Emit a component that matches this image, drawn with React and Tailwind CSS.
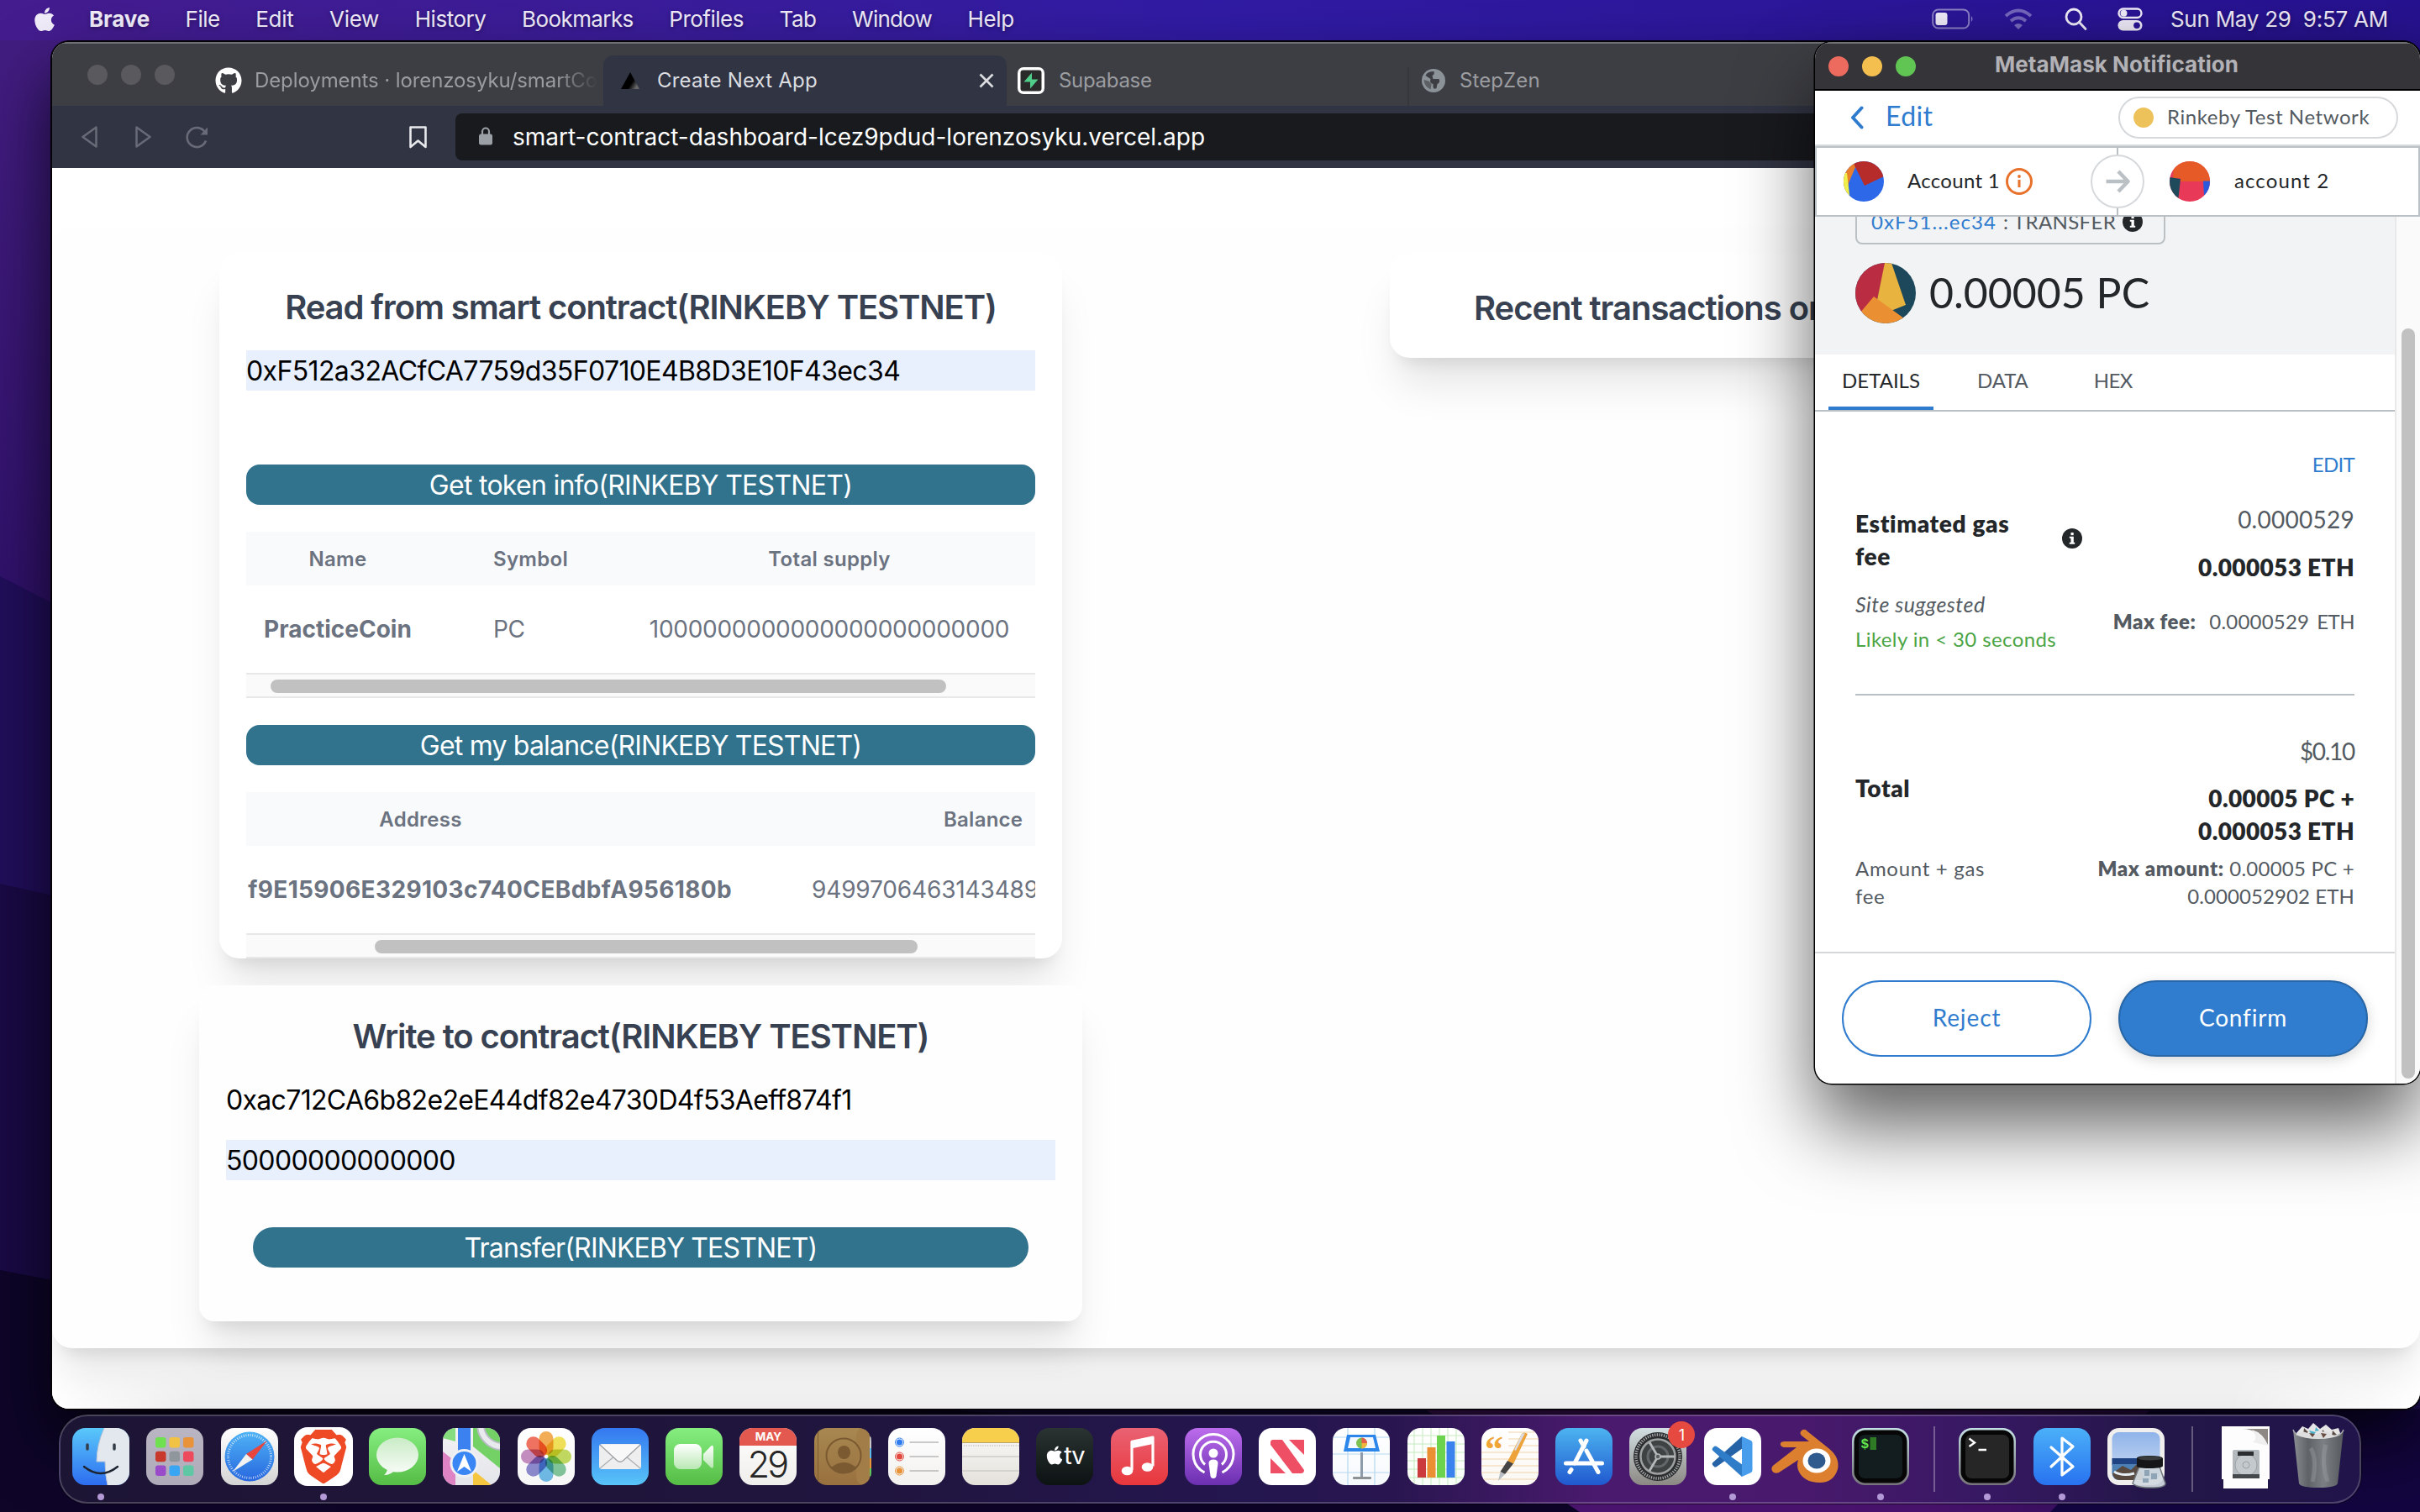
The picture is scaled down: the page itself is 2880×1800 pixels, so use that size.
import React from "react";
import { FaApple, FaGithub } from "react-icons/fa";
import { SiBrave } from "react-icons/si";

/* ---------- Wallpaper ---------- */
function Wallpaper() {
  return (
    <svg className="absolute inset-0 h-full w-full" viewBox="0 0 2880 1800" preserveAspectRatio="none" aria-hidden="true">
      <defs>
        <linearGradient id="wpTop" x1="0" y1="0" x2="0" y2="1">
          <stop offset="0" stopColor="#431e82" />
          <stop offset="1" stopColor="#2c0e66" />
        </linearGradient>
        <linearGradient id="wpPurple" x1="0" y1="0" x2="1" y2="0">
          <stop offset="0" stopColor="#4d1570" />
          <stop offset="0.5" stopColor="#48136c" />
          <stop offset="1" stopColor="#170643" />
        </linearGradient>
      </defs>
      <rect width="2880" height="1800" fill="#0d0428" />
      <path d="M0 0H2880V900H0Z" fill="url(#wpTop)" />
      <path d="M0 686L62 718L2880 1300V1700L0 1100Z" fill="#210e5c" />
      <path d="M0 1052L62 1066L2880 1700V1800L0 1600Z" fill="#190a45" />
      <path d="M0 1512L62 1524L400 1545V1800H0Z" fill="#0e0529" />
      <path d="M1695 1677H2880V1800H1880Z" fill="url(#wpPurple)" />
      <path d="M2560 1677H2880V1800H2440Z" fill="#13053f" />
      <rect x="2700" width="180" height="300" fill="#27128a" />
    </svg>
  );
}

/* ---------- Menu bar ---------- */
function MenuBar() {
  return (
    <header className="relative flex h-12 shrink-0 items-center bg-gradient-to-r from-[#441c8e] via-[#301ba4] to-[#27138f] pb-[3px] text-[26px] text-[#f0ecf9] [text-shadow:0_2px_5px_rgba(0,0,0,0.35)]">
      <FaApple className="ml-[37px] h-8 w-8" />
      <nav className="ml-[37px] flex items-center gap-[42.6px] whitespace-nowrap">
        <span className="font-bold tracking-[-0.14px]">Brave</span>
        <span className="tracking-[-0.5px]">File</span>
        <span className="tracking-[-0.3px]">Edit</span>
        <span className="tracking-[-0.3px]">View</span>
        <span className="tracking-[-0.45px]">History</span>
        <span className="tracking-[-0.6px]">Bookmarks</span>
        <span className="tracking-[-0.5px]">Profiles</span>
        <span className="tracking-[-0.5px]">Tab</span>
        <span className="tracking-[-0.8px]">Window</span>
        <span className="tracking-[-0.3px]">Help</span>
      </nav>
      <div className="ml-auto mr-[38px] flex items-center">
        <svg width="50" height="26" viewBox="0 0 50 26" fill="none">
          <rect x="1.2" y="1.5" width="43" height="22" rx="6.5" stroke="#f0ecf9" strokeOpacity="0.5" strokeWidth="2" />
          <rect x="4.5" y="5" width="14" height="15" rx="3" fill="#f0ecf9" />
          <path d="M47 9q3 3.500 0 7z" fill="#f0ecf9" fillOpacity="0.5" />
        </svg>
        <svg className="ml-[36px]" width="34" height="26" viewBox="0 0 34 26" fill="none" stroke="#f0ecf9" strokeOpacity="0.38" strokeWidth="4">
          <path d="M2 9Q17-4 32 9" />
          <path d="M8 15Q17 7.500 26 15" />
          <path d="M17 25l-5-5q5-4 10 0z" fill="#f0ecf9" fillOpacity="0.4" stroke="none" />
        </svg>
        <svg className="ml-[38px]" width="27" height="28" viewBox="0 0 27 28" fill="none" stroke="#f0ecf9" strokeWidth="2.800">
          <circle cx="11" cy="11" r="9" />
          <path d="M17.500 17.500l7.500 8" strokeLinecap="round" />
        </svg>
        <svg className="ml-[36px]" width="30" height="28" viewBox="0 0 30 28" fill="none">
          <rect x="1.500" y="1.500" width="27" height="10.500" rx="5.200" stroke="#f0ecf9" strokeWidth="2.400" />
          <circle cx="7.500" cy="6.700" r="4" fill="#f0ecf9" />
          <rect x="0.500" y="15" width="29" height="12.500" rx="6.200" fill="#f0ecf9" />
          <circle cx="23" cy="21.200" r="3.800" fill="#2a1596" />
        </svg>
        <span className="ml-[33px] whitespace-pre tracking-[-0.25px]">Sun May 29  9:57 AM</span>
      </div>
    </header>
  );
}

/* ---------- Browser ---------- */
function TabStrip() {
  return (
    <div className="flex h-[76px] items-end border-t-2 border-[#707176] bg-[#3d3e43] text-2xl text-[#9b9ca0]">
      <div className="flex h-[60px] w-[656px] items-center">
        <div className="mb-[14px] ml-[42px] flex gap-4">
          <i className="h-6 w-6 rounded-full bg-[#59595e]" />
          <i className="h-6 w-6 rounded-full bg-[#59595e]" />
          <i className="h-6 w-6 rounded-full bg-[#59595e]" />
        </div>
        <FaGithub className="ml-[48px] h-8 w-8 shrink-0 text-white" />
        <span className="ml-[15px] w-[408px] overflow-hidden whitespace-nowrap tracking-[-0.1px] [mask-image:linear-gradient(to_right,black_88%,transparent)]">
          Deployments · lorenzosyku/smartCo
        </span>
      </div>
      <div className="flex h-[60px] w-[480px] items-center rounded-t-xl bg-[#313443] text-[#dcdde0]">
        <svg className="ml-[21px]" width="22" height="20" viewBox="0 0 22 20">
          <defs>
            <linearGradient id="tri" x1="0" y1="0" x2="1" y2="0.600">
              <stop offset="0.700" stopColor="#000" />
              <stop offset="1" stopColor="#666" />
            </linearGradient>
          </defs>
          <path d="M11 0L22 20H0Z" fill="url(#tri)" />
        </svg>
        <span className="ml-[21px] whitespace-nowrap tracking-[0.2px]">Create Next App</span>
        <svg className="ml-auto mr-[15px]" width="18" height="18" viewBox="0 0 18 18" stroke="#dcdde0" strokeWidth="2.600">
          <path d="M1.500 1.500l15 15M16.500 1.500l-15 15" />
        </svg>
      </div>
      <div className="flex h-[60px] w-[477px] items-center">
        <svg className="ml-[13px]" width="32" height="32" viewBox="0 0 32 32">
          <rect width="32" height="32" rx="7" fill="#fff" />
          <rect x="3.500" y="3.500" width="25" height="25" rx="3" fill="#2a2a2a" />
          <path d="M17 6.500L7.500 17.500H15V25.500L24.500 14.500H17Z" fill="#4fce8a" />
        </svg>
        <span className="ml-[17px] tracking-[-0.3px]">Supabase</span>
      </div>
      <div className="flex h-[60px] w-[480px] items-center">
        <i className="h-[46px] w-[2px] self-end bg-[#36373b]" />
        <svg className="ml-[15px]" width="28" height="28" viewBox="0 0 28 28">
          <circle cx="14" cy="14" r="14" fill="#8b9398" />
          <path d="M14.500 3q1 4-2 5l1 4h7q2 4-2 6l-1 5q-4 2-4-2v-3q-5-1-3-6l-6-4q2-5 10-5z" fill="#3d3e43" />
          <path d="M2.500 13l6 1.500 3 4-1 6Q3 21 2.500 13z" fill="#3d3e43" fillOpacity="0.6" />
        </svg>
        <span className="ml-[17px] tracking-[0.1px]">StepZen</span>
      </div>
    </div>
  );
}

function Toolbar() {
  return (
    <div className="flex h-[74px] items-center bg-[#313443]">
      <svg className="ml-[35px]" width="19" height="26" viewBox="0 0 19 26" fill="none" stroke="#686b77" strokeWidth="2.500" strokeLinejoin="round">
        <path d="M17.500 1.500v23L1.500 13Z" />
      </svg>
      <svg className="ml-[45px]" width="19" height="26" viewBox="0 0 19 26" fill="none" stroke="#686b77" strokeWidth="2.500" strokeLinejoin="round">
        <path d="M1.500 1.500v23L17.500 13Z" />
      </svg>
      <svg className="ml-[41px]" width="27" height="27" viewBox="0 0 27 27" fill="none" stroke="#686b77" strokeWidth="2.600">
        <path d="M24 17.500A11.500 11.500 0 1 1 23 7.500" />
        <path d="M26 1.500V10.500H17.500Z" fill="#686b77" stroke="none" />
      </svg>
      <svg className="ml-[239px]" width="21" height="27" viewBox="0 0 21 27" fill="none" stroke="#e8e9ec" strokeWidth="2.600" strokeLinejoin="round">
        <path d="M1.500 1.500h18v23.500l-9-7.500-9 7.500Z" />
      </svg>
      <div className="ml-[34px] flex h-14 flex-1 items-center rounded-l-lg bg-[#191a1e]">
        <svg className="mb-0.5 ml-[28px]" width="16" height="22" viewBox="0 0 16 22">
          <rect y="8.500" width="16" height="13" rx="2.500" fill="#9aa0a6" />
          <path d="M4 9V5.500a4 4 0 0 1 8 0V9" fill="none" stroke="#9aa0a6" strokeWidth="2.200" />
        </svg>
        <span className="ml-[24px] whitespace-nowrap pb-px text-[28px] text-white">
          smart-contract-dashboard-lcez9pdud-lorenzosyku.vercel.app
        </span>
      </div>
    </div>
  );
}

const cardShadow = "shadow-[0_40px_50px_-10px_rgba(0,0,0,0.1),0_16px_20px_-12px_rgba(0,0,0,0.1)]";

function ScrollTrack({ left, width }) {
  return (
    <div className="flex h-[30px] items-center border-y-2 border-[#e8e8e8] bg-[#fafafa] pt-px">
      <i className="h-4 rounded-lg bg-[#c1c1c1]" style={{ marginLeft: left, width }} />
    </div>
  );
}

function ReadCard() {
  return (
    <section className={"ml-[199px] mt-[32px] h-[839px] w-[1003px] rounded-3xl bg-white px-8 pt-9 " + cardShadow}>
      <h2 className="text-center text-[40px] font-semibold leading-[56px] tracking-[-1.1px] text-[#374151]">
        Read from smart contract(RINKEBY TESTNET)
      </h2>
      <div className="mt-[23px] h-12 bg-[#e8f0fe] text-[32px] leading-[50px] tracking-[-0.61px] text-black">
        0xF512a32ACfCA7759d35F0710E4B8D3E10F43ec34
      </div>
      <button className="mt-[88px] block h-12 w-full rounded-2xl bg-[#31728d] text-[32px] leading-[49px] tracking-[-0.72px] text-white">
        Get token info(RINKEBY TESTNET)
      </button>
      <div className="mt-8 text-[#6b7280]">
        <div className="grid h-16 grid-cols-[218px_231px_490px] items-center bg-[#f9fafc] pt-0.5 text-2xl font-semibold tracking-[0.3px]">
          <span className="text-center">Name</span>
          <span className="pl-[76px]">Symbol</span>
          <span className="text-center">Total supply</span>
        </div>
        <div className="grid h-[104px] grid-cols-[218px_231px_490px] items-center text-[28px]">
          <span className="text-center font-bold">PracticeCoin</span>
          <span className="pl-[76px] tracking-[-0.5px]">PC</span>
          <span className="text-center tracking-[-0.28px]">1000000000000000000000000</span>
        </div>
        <ScrollTrack left={29} width={804} />
      </div>
      <button className="mt-8 block h-12 w-full rounded-2xl bg-[#31728d] text-[32px] leading-[49px] tracking-[-0.8px] text-white">
        Get my balance(RINKEBY TESTNET)
      </button>
      <div className="mt-8 overflow-hidden text-[#6b7280]">
        <div className="flex h-16 items-center bg-[#f9fafc] pt-0.5 text-2xl font-semibold tracking-[0.25px]">
          <span className="w-[415px] shrink-0 text-center">Address</span>
          <span className="ml-[415px] shrink-0">Balance</span>
        </div>
        <div className="flex h-[104px] items-center whitespace-nowrap text-[28px]">
          <span className="flex w-[578px] shrink-0 justify-end font-bold tracking-[0.35px]">f9E15906E329103c740CEBdbfA956180b</span>
          <span className="ml-[95px] shrink-0 tracking-[-0.15px]">9499706463143489</span>
        </div>
        <ScrollTrack left={153} width={646} />
      </div>
    </section>
  );
}

function WriteCard() {
  return (
    <section className={"ml-[175px] mt-8 h-[400px] w-[1051px] rounded-[18px] bg-[#fefefe] px-8 pt-8 " + cardShadow}>
      <h2 className="text-center text-[40px] font-semibold leading-[57px] tracking-[-1.1px] text-[#374151]">
        Write to contract(RINKEBY TESTNET)
      </h2>
      <div className="mt-[23px] h-12 text-[32px] leading-[50px] tracking-[-0.67px] text-black">0xac712CA6b82e2eE44df82e4730D4f53Aeff874f1</div>
      <div className="mt-6 h-12 bg-[#e8f0fe] text-[32px] leading-[50px] tracking-[-0.65px] text-black">50000000000000</div>
      <button className="mx-8 mt-14 block h-12 w-[923px] rounded-full bg-[#31728d] text-[32px] leading-[49px] tracking-[-0.82px] text-white">
        Transfer(RINKEBY TESTNET)
      </button>
    </section>
  );
}

function BrowserWindow() {
  return (
    <div className="absolute left-[62px] top-[50px] flex h-[1627px] w-[2818px] flex-col overflow-hidden rounded-[20px] bg-white shadow-[0_0_0_2px_#050308,0_40px_80px_rgba(0,0,0,0.75)]">
      <TabStrip />
      <Toolbar />
      <div className="relative flex-1 bg-white pt-[70px]">
        <main className={"relative flex h-[1335px] items-start rounded-3xl bg-[#fefefe] " + cardShadow}>
          <div>
            <ReadCard />
            <WriteCard />
          </div>
          <section className={"ml-[366px] mt-[32px] h-[124px] w-[1003px] rounded-3xl bg-white pl-[100px] pt-9 " + cardShadow}>
            <h2 className="whitespace-nowrap text-[40px] font-semibold leading-[57px] tracking-[-1.05px] text-[#374151]">Recent transactions on</h2>
          </section>
        </main>
        <div className="h-[72px] bg-gradient-to-b from-transparent from-30% to-[rgba(0,0,0,0.07)] [mask-image:linear-gradient(to_right,transparent,black_6%,black_92%,transparent)]" />
      </div>
    </div>
  );
}

/* ---------- MetaMask ---------- */
function InfoSolid() {
  return (
    <svg width="24" height="24" viewBox="0 0 24 24">
      <circle cx="12" cy="12" r="12" fill="#24272a" />
      <rect x="10.500" y="5" width="3.200" height="3.200" fill="#fff" />
      <path d="M8.800 9.800h5v7h1.400v2H8.800v-2h1.700v-5H8.800z" fill="#fff" />
    </svg>
  );
}

function MetaMaskWindow() {
  return (
    <div className="absolute left-[2160px] top-[50px] flex h-[1240px] w-[720px] flex-col overflow-hidden rounded-[20px] bg-white font-['Lato',sans-serif] text-2xl text-[#24272a] shadow-[0_0_0_1.5px_#000,0_50px_90px_rgba(0,0,0,0.62)] [font-variant-ligatures:none]">
      <div className="flex h-[58px] shrink-0 items-center border-b-2 border-t-2 border-b-black border-t-[#707075] bg-[#353439]">
        <div className="ml-4 flex gap-4">
          <i className="h-6 w-6 rounded-full bg-[#ec6a5e]" />
          <i className="h-6 w-6 rounded-full bg-[#f4bf4f]" />
          <i className="h-6 w-6 rounded-full bg-[#61c554]" />
        </div>
        <span className="ml-[94px] pb-[3px] font-['Inter',sans-serif] text-[26px] font-bold tracking-[0.06px] text-[#b2b1b6]">MetaMask Notification</span>
      </div>
      <div className="flex h-[64px] shrink-0 items-center">
        <svg className="ml-[42px]" width="16" height="28" viewBox="0 0 16 28" fill="none" stroke="#2f7ccf" strokeWidth="4" strokeLinecap="round" strokeLinejoin="round">
          <path d="M13.500 2.500L3 14l10.500 11.500" />
        </svg>
        <span className="ml-[26px] pb-[3px] text-[32px] tracking-[0.4px] text-[#2f7ccf]">Edit</span>
        <div className="ml-auto mr-[26px] flex h-[50px] w-[333px] items-center rounded-full border-2 border-[#d6d9dc]">
          <i className="ml-4 h-6 w-6 rounded-full bg-[#edc25a]" />
          <span className="ml-4 whitespace-nowrap pb-0.5 tracking-[0.56px] text-[#535a61]">Rinkeby Test Network</span>
        </div>
      </div>
      <div className="h-[2px] shrink-0 bg-[#d6d9dc]" />
      <div className="relative z-10 flex h-[84px] shrink-0 items-center border-2 border-[#bbc0c5] bg-white">
        <svg className="ml-8" width="48" height="48" viewBox="0 0 48 48">
          <clipPath id="a1"><circle cx="24" cy="24" r="24" /></clipPath>
          <g clipPath="url(#a1)">
            <rect width="48" height="48" fill="#2c68e8" />
            <path d="M12 0L14 7L6 26L3 48H0V0Z" fill="#ea7f2b" />
            <path d="M0 14L4 14L8 48H0Z" fill="#f0f04a" />
            <path d="M12 0H48V18L25 29L13 5Z" fill="#b62c2a" />
          </g>
        </svg>
        <span className="ml-[28px] whitespace-nowrap pb-0.5 tracking-[0.3px]">Account 1</span>
        <svg className="ml-[7px]" width="32" height="32" viewBox="0 0 32 32" fill="none">
          <circle cx="16" cy="16" r="14.500" stroke="#e8712b" strokeWidth="3" />
          <path d="M16 14v9" stroke="#e8712b" strokeWidth="3" />
          <circle cx="16" cy="10" r="1.900" fill="#e8712b" />
        </svg>
        <svg className="ml-[69px]" width="64" height="80" viewBox="0 0 64 80" fill="none">
          <path d="M32 0v80" stroke="#bbc0c5" strokeWidth="2" />
          <circle cx="32" cy="40" r="31" fill="#fff" stroke="#d6d9dc" strokeWidth="2" />
          <path d="M18.500 40H44M33 28l11.500 12L33 52" stroke="#bbc0c5" strokeWidth="4.500" strokeLinejoin="round" />
        </svg>
        <svg className="ml-[30px]" width="48" height="48" viewBox="0 0 48 48">
          <clipPath id="a2"><circle cx="24" cy="24" r="24" /></clipPath>
          <g clipPath="url(#a2)">
            <rect width="48" height="48" fill="#e83a58" />
            <path d="M5 0H48V24H13V20H4Z" fill="#e55a27" />
            <path d="M0 19L13 21L10 48H0Z" fill="#1f4a5c" />
            <path d="M40 23.500H48V40L41 40Z" fill="#2b59dc" />
          </g>
        </svg>
        <span className="ml-[29px] whitespace-nowrap pb-0.5 tracking-[1.1px]">account 2</span>
      </div>
      <div className="flex min-h-0 flex-1">
        <div className="flex w-[690px] flex-col">
          <div className="h-[164px] shrink-0 overflow-hidden bg-[#f2f3f4] pl-12">
            <div className="-mt-[20px] flex h-[53px] w-[369px] items-center rounded-lg border-2 border-[#bbc0c5] pb-px pl-[17px]">
              <span className="tracking-[1.07px] text-[#2f7ccf]">0xF51...ec34</span>
              <span className="ml-[8px] tracking-[0.33px] text-[#535a61]">: TRANSFER</span>
              <span className="ml-[8px]"><InfoSolid /></span>
            </div>
            <div className="mt-[22px] flex items-center">
              <svg width="72" height="72" viewBox="0 0 72 72">
                <clipPath id="a3"><circle cx="36" cy="36" r="36" /></clipPath>
                <g clipPath="url(#a3)">
                  <rect width="72" height="72" fill="#1d475b" />
                  <path d="M0 0H36L26 44L0 72Z" fill="#b92c42" />
                  <path d="M35 0H43L60 50L40 58L26 44Z" fill="#e8b33e" />
                  <path d="M22 40L58 66V72H0V66Z" fill="#ea8f32" />
                </g>
              </svg>
              <span className="ml-4 whitespace-nowrap pb-0.5 text-[50px] leading-[60px]">0.00005 PC</span>
            </div>
          </div>
          <div className="flex h-[68px] shrink-0 border-b-2 border-[#bbc0c5] pl-4 text-[#535a61]">
            <span className="flex w-[125px] items-center justify-center border-b-4 border-[#2f7ccf] text-[#24272a]">DETAILS</span>
            <span className="ml-[52px] flex items-center pb-1 tracking-[-0.1px]">DATA</span>
            <span className="ml-[78px] flex items-center pb-1 tracking-[-0.6px]">HEX</span>
          </div>
          <div className="mt-[45px] h-[36px] pr-12 text-right leading-[36px] tracking-[-0.7px] text-[#2f7ccf]">EDIT</div>
          <div className="mx-12 flex h-[257px] shrink-0 justify-between border-b-2 border-[#bbc0c5]">
            <div className="flex w-[270px] flex-col pt-[33px]">
              <div className="flex items-center justify-between">
                <span className="w-[200px] text-[28px] font-extrabold leading-[39px] tracking-[0.65px]">Estimated gas fee</span>
                <span className="-mt-[4px]"><InfoSolid /></span>
              </div>
              <span className="mt-4 text-[25px] italic leading-[42px] tracking-[0.5px] text-[#535a61]">Site suggested</span>
              <span className="whitespace-nowrap leading-[42px] tracking-[0.4px] text-[#4ba545]">Likely in &lt; 30 seconds</span>
            </div>
            <div className="flex flex-col items-end whitespace-nowrap pt-[27px]">
              <span className="text-[28px] leading-[41px] tracking-[0.26px] text-[#535a61]">0.0000529</span>
              <span className="mt-4 text-[28px] font-extrabold leading-10 tracking-[0.35px]">0.000053 ETH</span>
              <span className="mt-[25px] flex leading-10 text-[#535a61]">
                <b className="font-extrabold tracking-[0.5px]">Max fee:</b>
                <span className="ml-4 tracking-[0.2px]">0.0000529</span>
                <span className="ml-[9px] tracking-[-0.5px]">ETH</span>
              </span>
            </div>
          </div>
          <div className="mx-12 flex h-[305px] shrink-0 justify-between">
            <div className="flex w-[170px] flex-col pt-[90px]">
              <span className="text-[28px] font-extrabold leading-10 tracking-[0.6px]">Total</span>
              <span className="mt-[59px] leading-[33px] tracking-[0.7px] text-[#535a61]">Amount + gas fee</span>
            </div>
            <div className="flex flex-col items-end whitespace-nowrap pt-[46px]">
              <span className="text-[28px] leading-10 tracking-[-1.3px] text-[#535a61]">$0.10</span>
              <span className="mt-[17px] text-[28px] font-extrabold leading-[39px] tracking-[0.35px]">0.00005 PC +</span>
              <span className="text-[28px] font-extrabold leading-[39px] tracking-[0.35px]">0.000053 ETH</span>
              <span className="mt-[8px] leading-[33px] tracking-[0.24px] text-[#535a61]">
                <b className="font-extrabold tracking-[0.65px]">Max amount:</b> 0.00005 PC +
              </span>
              <span className="leading-[33px] tracking-[0.1px] text-[#535a61]">0.000052902 ETH</span>
            </div>
          </div>
          <div className="flex flex-1 items-start gap-8 border-t-2 border-[#d6d9dc] pl-8 pt-8 text-[28px]">
            <button className="h-[91px] w-[297px] rounded-full border-2 border-[#2f7ccf] pb-0.5 tracking-[0.9px] text-[#2f7ccf]">Reject</button>
            <button className="h-[91px] w-[297px] rounded-full border-2 border-[#2866a6] bg-[#307dd0] pb-0.5 tracking-[0.8px] text-white shadow-[0_4px_16px_rgba(0,0,0,0.16)]">Confirm</button>
          </div>
        </div>
        <div className="flex w-[30px] justify-end border-l-2 border-[#e8e8e8] bg-[#fafafa] pr-[6px]">
          <i className="mt-[133px] h-[893px] w-4 rounded-full bg-[#c1c1c1]" />
        </div>
      </div>
    </div>
  );
}

/* ---------- Dock icons (68 × 68) ---------- */
function Grad({ id, from, to }) {
  return (
    <linearGradient id={id} x1="0" y1="0" x2="0" y2="1">
      <stop offset="0" stopColor={from} />
      <stop offset="1" stopColor={to} />
    </linearGradient>
  );
}

function Tile({ id, from, to, children }) {
  return (
    <svg width="68" height="68" viewBox="0 0 68 68" className="block overflow-visible">
      <defs>
        <Grad id={id} from={from} to={to} />
        <clipPath id={id + "c"}><rect width="68" height="68" rx="15.500" /></clipPath>
      </defs>
      <g clipPath={"url(#" + id + "c)"}>
        <rect width="68" height="68" fill={"url(#" + id + ")"} />
        {children}
      </g>
    </svg>
  );
}

const Finder = () => (
  <Tile id="fi" from="#5ac8fa" to="#2d6df0">
    <path d="M38 0Q29 20 29 40H39Q39 56 42 68H68V0Z" fill="#e3e7ee" />
    <path d="M38 0Q29 20 29 40H39Q39 56 42 68" fill="none" stroke="#b9c4d8" strokeWidth="1" />
    <path d="M18 20v5M50 20v5" stroke="#333d4a" strokeWidth="3.500" strokeLinecap="round" />
    <path d="M14 46Q34 62 54 46" fill="none" stroke="#1c2530" strokeWidth="2.400" strokeLinecap="round" />
  </Tile>
);

const PADS = [["#6fe04f", "#f2c244", "#e8923a"], ["#c9392b", "#8f979c", "#ee4a5e"], ["#9a4bc9", "#3aa5f2", "#5fc7a4"]];
const Launchpad = () => (
  <Tile id="lp" from="#bab5c2" to="#b0abb9">
    {PADS.map((row, r) => row.map((c, k) => <rect key={r + "-" + k} x={11 + k * 16.5} y={11 + r * 16.7} width="12.500" height="12.500" rx="3" fill={c} />))}
  </Tile>
);

const Safari = () => (
  <Tile id="sa" from="#ffffff" to="#d4d4d4">
    <defs><Grad id="sab" from="#4fb3f5" to="#2767df" /></defs>
    <circle cx="34" cy="34" r="29.500" fill="url(#sab)" />
    <circle cx="34" cy="34" r="25.500" fill="none" stroke="#fff" strokeOpacity="0.8" strokeWidth="3" strokeDasharray="0.8 1.870" />
    <path d="M55 15L30 31L37.500 37.500Z" fill="#e8453c" />
    <path d="M14 52L30 31L37.500 37.500Z" fill="#f2f2f2" />
  </Tile>
);

const Brave = () => (
  <div className="flex h-[70px] w-[70px] items-center justify-center rounded-2xl bg-white">
    <SiBrave size={64} color="#ee4a26" />
  </div>
);

const Messages = () => (
  <Tile id="ms" from="#86ee80" to="#55bd45">
    <defs><Grad id="msb" from="#c9ecc6" to="#f6fbf5" /></defs>
    <ellipse cx="34" cy="32" rx="25" ry="20.500" fill="url(#msb)" />
    <path d="M22 47q0 6-4 9q8 0 13-6z" fill="#eef8ed" />
  </Tile>
);

const Maps = () => (
  <Tile id="mp" from="#f3f3f5" to="#e4e5ea">
    <path d="M0 0H15V16L0 12Z" fill="#86dd7d" />
    <path d="M36 0H68V48L36 22Z" fill="#73d166" />
    <path d="M0 28L15 40V68H0Z" fill="#de84c4" />
    <path d="M36 68V50L58 68Z" fill="#f5c63f" />
    <path d="M45-4A26 26 0 0 0 72 22" fill="none" stroke="#b9bcc5" strokeWidth="10" />
    <path d="M45-4A26 26 0 0 0 72 22" fill="none" stroke="#e9eaee" strokeWidth="6" />
    <rect x="18" width="15" height="36" fill="#3b82f0" />
    <circle cx="25.500" cy="42" r="17" fill="#eef0f4" />
    <circle cx="25.500" cy="42" r="14" fill="#3a86f5" />
    <path d="M25.500 31L34 52L25.500 46L17 52Z" fill="#fff" />
  </Tile>
);

const PETALS = ["#f3a03a", "#f0dc3c", "#b9d545", "#6fc08c", "#58b2e8", "#7a78c8", "#bd7bb8", "#ef5a45"];
const Photos = () => (
  <Tile id="ph" from="#ffffff" to="#f6f6f6">
    {PETALS.map((c, i) => (
      <rect key={c} x="25.500" y="4" width="17" height="28" rx="8.500" fill={c} fillOpacity="0.85" transform={"rotate(" + i * 45 + " 34 34)"} className="mix-blend-multiply" />
    ))}
  </Tile>
);

const Mail = () => (
  <Tile id="ml" from="#3478f0" to="#58c4f8">
    <rect x="9" y="19" width="50" height="30" rx="3.500" fill="#eeeeee" />
    <path d="M10 48L28 33M58 48L40 33" stroke="#aeb2b5" strokeWidth="1.400" />
    <path d="M10 20L30 38.500q4 3.500 8 0L58 20" fill="#f8f8f8" stroke="#9fa3a6" strokeWidth="1.400" />
  </Tile>
);

const FaceTime = () => (
  <Tile id="ft" from="#86ee80" to="#55bd45">
    <defs><Grad id="ftb" from="#ffffff" to="#b9e8b3" /></defs>
    <rect x="10" y="19" width="33" height="30" rx="7.500" fill="url(#ftb)" />
    <path d="M45 31L54 21.500q3-2 3 2V45q0 4-3 2L45 38Z" fill="url(#ftb)" />
  </Tile>
);

const CalendarIcon = () => (
  <div className="flex h-[68px] w-[68px] flex-col items-center rounded-[15.5px] bg-gradient-to-b from-white to-[#efeeec]">
    <span className="flex h-[21px] w-full items-center justify-center rounded-t-[15.5px] bg-[#e4594f] text-[13.5px] font-bold leading-none text-white">MAY</span>
    <span className="-ml-[3px] text-[43px] font-light leading-[44px] tracking-[-3px] text-[#262626]">29</span>
  </div>
);

const Contacts = () => (
  <Tile id="ct" from="#a88850" to="#98703f">
    <rect x="62" width="6" height="68" fill="#20153e" />
    <path d="M65 9q5 3 5 8v7h-5z" fill="#c6c6c8" />
    <rect x="65" y="24" width="3.500" height="12" fill="#5cb9ea" />
    <rect x="65" y="36" width="3.500" height="12" fill="#e8923a" />
    <path d="M65 48h3.500v8l-3.500 3z" fill="#5fc95c" />
    <rect x="50" width="16" height="68" rx="10" fill="#a27d48" />
    <path d="M4.500 0V68" stroke="#7d5b30" strokeWidth="1" />
    <circle cx="35" cy="33" r="20.500" fill="none" stroke="#7b5a31" strokeWidth="2" />
    <ellipse cx="35.500" cy="29" rx="7.500" ry="8" fill="#7b5a31" />
    <path d="M20 47q15-12 30 0q-6 7-15 7t-15-7z" fill="#7b5a31" />
  </Tile>
);

const Reminders = () => (
  <Tile id="rm" from="#ffffff" to="#f2f1ef">
    {["#2f7cf0", "#e2483d", "#e8923a"].map((c, i) => (
      <g key={c}>
        <circle cx="13.500" cy={17 + i * 17} r="5" fill="none" stroke={c} strokeWidth="1" />
        <circle cx="13.500" cy={17 + i * 17} r="3.600" fill={c} />
        <path d={"M25.500 " + (17 + i * 17) + "H60"} stroke="#b9b9b9" strokeWidth="1.500" />
      </g>
    ))}
  </Tile>
);

const Notes = () => (
  <Tile id="nt" from="#fbfbfa" to="#e4e1db">
    <rect width="68" height="17" fill="#f8cf4c" />
    <path d="M0 17.500H68" stroke="#b6a26a" strokeWidth="1" />
    <path d="M2 21H68" stroke="#aaa" strokeWidth="1.200" strokeDasharray="1.200 1.600" />
    <path d="M0 34H68M0 51H68" stroke="#cfcdc9" strokeWidth="1.300" />
  </Tile>
);

const AppleTV = () => (
  <div className="flex h-[68px] w-[68px] items-center justify-center rounded-[15.5px] bg-gradient-to-b from-[#2a3432] to-[#0d1213] pb-1 text-white">
    <FaApple className="h-[25px] w-[22px]" />
    <span className="text-[29px] leading-none tracking-[-1px]">tv</span>
  </div>
);

const Music = () => (
  <Tile id="mu" from="#ea6273" to="#e8373c">
    <path d="M24 16.500L50 11V45.500" fill="none" stroke="#fff" strokeWidth="3.200" strokeLinejoin="round" />
    <path d="M24 16.500L50 11V19L24 24.500Z" fill="#fff" />
    <path d="M25 16V50" stroke="#fff" strokeWidth="3.200" />
    <ellipse cx="19.500" cy="51" rx="6.800" ry="5.200" fill="#fff" />
    <ellipse cx="43.500" cy="46.500" rx="6.800" ry="5.200" fill="#fff" />
  </Tile>
);

const Podcasts = () => (
  <Tile id="pc" from="#bc6cec" to="#6a2fb0">
    <g fill="none" stroke="#fff" strokeWidth="3">
      <path d="M23.500 53A24 24 0 1 1 44.500 53" />
      <path d="M24 43.500A15.500 15.500 0 1 1 44 43.500" />
    </g>
    <circle cx="34" cy="30" r="5.500" fill="#fff" />
    <path d="M28.500 42q0-4.500 5.500-4.500t5.500 4.500l-2 15q-.5 3-3.500 3t-3.500-3z" fill="#fff" />
  </Tile>
);

const News = () => (
  <Tile id="nw" from="#ffffff" to="#ffffff">
    <path d="M14 17q0-3 3-3H28L54 50q0 4-4 4H40L14 20Z" fill="#ee4f64" />
    <path d="M36 14H54V32Z" fill="#ee4f64" />
    <path d="M14 36V54H32Z" fill="#ee4f64" />
  </Tile>
);

const Keynote = () => (
  <Tile id="kn" from="#ffffff" to="#f6f9fc">
    <path d="M0 11H68M0 31H68M0 53H68M18 0V68M50 0V68" stroke="#b5d8ef" strokeWidth="1.200" />
    <path d="M17 8H51L56 28H13Z" fill="#2d86ea" />
    <path d="M21 11H48L51 24H18Z" fill="#f2f8fd" />
    <circle cx="34.500" cy="18" r="6.500" fill="#7ac14f" />
    <path d="M34.500 18V11.500A6.500 6.500 0 0 1 41 18Z" fill="#e55d4b" />
    <path d="M34.500 18H41A6.500 6.500 0 0 1 34.500 24.500Z" fill="#eeb43d" />
    <path d="M34.500 29V60" stroke="#8e9bab" strokeWidth="3" />
    <rect x="24" y="58" width="22" height="3" rx="1" fill="#8d9297" />
  </Tile>
);

const Numbers = () => (
  <Tile id="nm" from="#ffffff" to="#f8fdf6">
    <path d="M0 9H68M0 19H68M0 29H68M0 39H68M0 49H68M0 59H68M8 0V68M18 0V68M28 0V68M38 0V68M48 0V68M58 0V68" stroke="#c4ebbf" strokeWidth="1" />
    <rect x="12" y="36" width="10" height="23" fill="#cb3b3d" />
    <rect x="23.500" y="23" width="10" height="36" fill="#ea8f32" />
    <rect x="35" y="9" width="10" height="50" fill="#6cd34e" />
    <rect x="46.500" y="16" width="10" height="43" fill="#3a82ee" />
  </Tile>
);

const Pages = () => (
  <Tile id="pg" from="#ffffff" to="#fbf8f3">
    <path d="M32 5H68M32 13H68M32 21H68M0 29H68M0 37H68M0 45H68M0 53H68M0 61H68" stroke="#f2d3ac" strokeWidth="1.200" />
    <text x="4" y="40" fontFamily="Liberation Serif" fontWeight="700" fontSize="44" fill="#f0a537">“</text>
    <path d="M48 7q3-3 7 0L38 43L31 40Z" fill="#eda23a" />
    <path d="M48 7L39 26l2 1L52 6z" fill="#d9dce2" />
    <path d="M31 39L38 42.500L28 55L22.500 52Z" fill="#454545" />
    <path d="M22.500 52L28 55L20 63Z" fill="#b9bec4" />
  </Tile>
);

const AppStore = () => (
  <Tile id="as" from="#4cb4f0" to="#2058cf">
    <g stroke="#fff" strokeWidth="5" strokeLinecap="round">
      <path d="M37 15L23 42" />
      <path d="M19 49.500L17 52.500" />
      <path d="M30 15L34 22M37 27L51 52.500" />
      <path d="M12.500 42H55.500" />
    </g>
  </Tile>
);

const Settings = () => (
  <div className="relative">
    <Tile id="st" from="#d3dfe3" to="#8b8883">
      <circle cx="34" cy="34" r="29" fill="#2a2c2e" />
      <circle cx="34" cy="34" r="26" fill="none" stroke="#a7abac" strokeWidth="3.500" strokeDasharray="1.300 1.500" />
      <circle cx="34" cy="34" r="20.500" fill="#3f4243" stroke="#9da1a2" strokeWidth="2.500" />
      <circle cx="34" cy="34" r="12" fill="none" stroke="#63676a" strokeWidth="3" />
      <path d="M34 34H54M34 34L24 17M34 34L24 51" stroke="#b5b9ba" strokeWidth="2.800" />
      <circle cx="34" cy="34" r="3" fill="#5c5f60" stroke="#b5b9ba" strokeWidth="1.600" />
    </Tile>
    <span className="absolute -right-[10px] -top-2 flex h-8 w-8 items-center justify-center rounded-full bg-[#e5493f] text-[18px] text-white">1</span>
  </div>
);

const VSCode = () => (
  <Tile id="vs" from="#ffffff" to="#ffffff">
    <path d="M45 10L46 24L15 46Q13 47 12 46L10 44Q9 42 10.500 41Z" fill="#2563a6" />
    <path d="M45 58L46 44L15 22Q13 21 12 22L10 24Q9 26 10.500 27Z" fill="#2f7cc9" />
    <path d="M45 10L56 15Q57.500 16 57.500 18V50Q57.500 52 56 53L45 58Z" fill="#479ceb" />
  </Tile>
);

const BlenderIcon = () => (
  <svg width="88" height="68" viewBox="0 0 88 68" className="block overflow-visible">
    <path d="M38 3Q42 0 45 4L70 24Q84 35 81 49Q76 65 60 65Q40 65 34 50Q32 44 34 38L11 53Q5 55 3 51Q1 47 5 44L32 23H17Q12 22 13 18Q14 16 18 16H47L38 9Q35 6 38 3Z" fill="#dc8030" />
    <ellipse cx="56" cy="39" rx="16.500" ry="14.500" fill="#fff" />
    <ellipse cx="56" cy="39" rx="10.500" ry="9.500" fill="#2e5a8d" />
  </svg>
);

function TerminalFrame({ id, screen, children }) {
  return (
    <Tile id={id} from="#c5e0e5" to="#77747a">
      <rect x="2.500" y="2.500" width="63" height="63" rx="13.500" fill="#060607" />
      <rect x="8" y="8" width="52" height="52" rx="7" fill={screen} />
      {children}
    </Tile>
  );
}
const ITerm = () => (
  <TerminalFrame id="it" screen="#131c1f">
    <text x="10.500" y="24" fontFamily="Liberation Mono" fontWeight="700" fontSize="16" fill="#63e24a">$</text>
    <rect x="21.500" y="11" width="7.500" height="15" fill="#2f7a25" />
  </TerminalFrame>
);
const Terminal = () => (
  <TerminalFrame id="te" screen="#262626">
    <path d="M12.500 12.500L19 17.500L12.500 22M23.500 26H33" stroke="#fff" strokeWidth="2.400" fill="none" />
  </TerminalFrame>
);
const Bluetooth = () => (
  <Tile id="bt" from="#4bb0f8" to="#2872f0">
    <path d="M21 23L47 46L34 56V12L47 22L21 46" fill="none" stroke="#fff" strokeWidth="3.200" strokeLinejoin="round" strokeLinecap="round" />
  </Tile>
);
const Preview = () => (
  <svg width="72" height="72" viewBox="0 0 72 72" className="ml-1 mt-1 block overflow-visible">
    <defs><Grad id="pvs" from="#8fb4ea" to="#cfdcf2" /></defs>
    <rect width="68" height="68" rx="14" fill="#f1efee" />
    <rect x="5.500" y="5" width="57" height="57" rx="8" fill="url(#pvs)" />
    <path d="M5.500 36H62.500V44H5.500Z" fill="#1e4282" />
    <path d="M5.500 43H62.500V56Q60 62 54 62H14Q6 61 5.500 54Z" fill="#4d80b4" />
    <path d="M6 54L18 45L28 50L36 42L44 62H14Q7 61 6 54Z" fill="#57493f" />
    <path d="M8 52q10 6 24 2" stroke="#e5edf4" strokeWidth="3" fill="none" />
    <path d="M38 46H62L69 66Q69 71 52 71T30 66Z" fill="#d3dae0" fillOpacity="0.93" stroke="#6f777d" strokeWidth="1.500" />
    <path d="M44 50h6v7h-6zM52 54h7v7h-7zM42 60h7v5h-7z" fill="#8fa5b5" />
    <path d="M35 36Q35 33 50 33T66 36V45Q66 48 50 48T35 45Z" fill="#151617" />
    <ellipse cx="50.500" cy="36" rx="14" ry="2.500" fill="#3a3b3d" />
  </svg>
);
const DiskImage = () => (
  <svg width="58" height="74" viewBox="0 0 58 74" className="ml-[3px] mt-[2px] block">
    <path d="M0 0H57V63H55V74H2V63H0Z" fill="#fdfdfd" />
    <path d="M22 3Q44 2 55 22V3Z" fill="#8d8883" />
    <path d="M36 4q8 10 1 15l18 4Q50 8 36 4z" fill="#efefef" />
    <rect x="13" y="28" width="32" height="34" rx="2" fill="#b3b9bd" />
    <circle cx="29" cy="46" r="13" fill="#c3c9cc" stroke="#9ba1a5" strokeWidth="1" />
    <circle cx="29" cy="46" r="4" fill="none" stroke="#9ba1a5" strokeWidth="1" />
    <rect x="19" y="30" width="19" height="5" fill="#2b2d2f" />
    <rect x="13" y="57" width="32" height="5" fill="#46494c" />
  </svg>
);
const Trash = () => (
  <svg width="62" height="78" viewBox="0 0 62 78" className="mb-[2px] block">
    <defs>
      <linearGradient id="tr" x1="0" y1="0" x2="1" y2="0">
        <stop offset="0" stopColor="#8b8f93" /><stop offset="0.300" stopColor="#5f6367" />
        <stop offset="0.600" stopColor="#7c8084" /><stop offset="1" stopColor="#55585c" />
      </linearGradient>
    </defs>
    <path d="M4 13L12 4L19 7L25 0L33 7L40 2L47 8L55 6L58 15L50 20H10Z" fill="#e6e6e6" />
    <path d="M14 6l5 5-6 3zM36 8l8 8h-9zM48 9l5 5-6 2z" fill="#5b4c46" />
    <path d="M20 9l8 2-4 5zM28 5l4 4-5 1z" fill="#4bb1c9" />
    <path d="M1 8Q4 18 31 18T61 8L54 72Q52 77 31 77T8 72Z" fill="url(#tr)" />
    <path d="M1 8Q4 18 31 18T61 8" fill="none" stroke="#a5a8ab" strokeWidth="1.500" />
    <path d="M4 14q8-6 14-2t14 0 12 0 14 2q-12 5-27 5T4 14z" fill="#dedede" />
    <path d="M20 12l7 1-3 4zM34 12l7 1-4 5z" fill="#6a4d42" />
    <path d="M22 30q8 14 2 40M40 26q-6 20 2 44" stroke="#a3a7aa" strokeOpacity="0.35" strokeWidth="5" fill="none" />
  </svg>
);

const MAIN = [
  [Finder, true], [Launchpad], [Safari], [Brave, true], [Messages], [Maps], [Photos], [Mail], [FaceTime], [CalendarIcon],
  [Contacts], [Reminders], [Notes], [AppleTV], [Music], [Podcasts], [News], [Keynote], [Numbers], [Pages], [AppStore],
  [Settings], [VSCode, true], [BlenderIcon], [ITerm, true],
];
const RECENT = [[Terminal, true], [Bluetooth, true], [Preview]];
const STACKS = [[DiskImage], [Trash]];

function DockGroup({ items }) {
  return items.map(([Icon, running], i) => (
    <div key={i} className="flex w-[88.25px] shrink-0 flex-col items-center">
      <div className="flex h-24 items-center justify-center"><Icon /></div>
      <i className={running ? "-mt-[4px] h-2 w-2 rounded-full bg-[#b39ad6]" : "-mt-[4px] h-2 w-2"} />
    </div>
  ));
}

function Dock() {
  return (
    <footer className="relative mb-[10px] ml-[70px] mt-auto flex h-[106px] w-[2740px] shrink-0 rounded-[34px] border-2 border-white/20 bg-[linear-gradient(to_right,#1d1534_0%,#20153e_35%,#24164f_52%,#291650_58%,#4a1a6e_67%,#48196c_76%,#361862_84%,#231648_91%,#20144a_100%)] pl-[4px] shadow-[0_0_0_1px_rgba(0,0,0,0.5)]">
      <DockGroup items={MAIN} />
      <div className="ml-[19px] mr-[18px] mt-[12px] h-[78px] w-[2px] shrink-0 bg-white/30" />
      <DockGroup items={RECENT} />
      <div className="ml-[22px] mr-[17px] mt-[12px] h-[78px] w-[2px] shrink-0 bg-white/30" />
      <DockGroup items={STACKS} />
    </footer>
  );
}

export default function App() {
  return (
    <div className="relative flex h-[1800px] w-[2880px] flex-col overflow-hidden bg-[#0d0428] font-['Inter',sans-serif]">
      <Wallpaper />
      <MenuBar />
      <BrowserWindow />
      <MetaMaskWindow />
      <Dock />
    </div>
  );
}
